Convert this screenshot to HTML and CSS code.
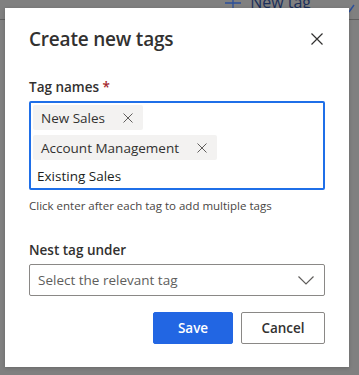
FILE: index.html
```html
<!DOCTYPE html>
<html lang="en">
<head>
    <meta charset="UTF-8">
    <meta name="viewport" content="width=device-width, initial-scale=1.0">
    <title>Create new tags</title>
    <link rel="stylesheet" href="styles.css">
</head>
<body>
    <div class="page">
        <div class="toolbar">
            <svg class="plus" width="16" height="16" viewBox="0 0 16 16"><path d="M8 0 V16 M0 8 H16" stroke="#2b4f9a" stroke-width="1.3"/></svg>
            <span class="new-tag">New tag</span>
            <svg class="search" width="10" height="14" viewBox="0 0 10 14"><path d="M2 12 L7 5" stroke="#2b4f9a" stroke-width="1.4" fill="none"/></svg>
        </div>
        <div class="rule"></div>
    </div>

    <div class="overlay">
        <div class="dialog">
            <div class="dialog-head">
                <h1>Create new tags</h1>
                <svg class="close" width="12" height="12" viewBox="0 0 12 12"><path d="M0.5 0.5 L11.5 11.5 M11.5 0.5 L0.5 11.5" stroke="#323130" stroke-width="1.2"/></svg>
            </div>

            <label class="field-label">Tag names <span class="req">*</span></label>
            <div class="tag-box">
                <div class="chip">New Sales <svg width="10" height="10" viewBox="0 0 10 10"><path d="M0.5 0.5 L9.5 9.5 M9.5 0.5 L0.5 9.5" stroke="#605e5c" stroke-width="1"/></svg></div>
                <div class="chip">Account Management <svg width="10" height="10" viewBox="0 0 10 10"><path d="M0.5 0.5 L9.5 9.5 M9.5 0.5 L0.5 9.5" stroke="#605e5c" stroke-width="1"/></svg></div>
                <div class="typed">Existing Sales</div>
            </div>
            <p class="hint">Click enter after each tag to add multiple tags</p>

            <label class="field-label nest">Nest tag under</label>
            <div class="select">
                <span>Select the relevant tag</span>
                <svg width="16" height="9" viewBox="0 0 16 9"><path d="M0.5 0.5 L8 8 L15.5 0.5" stroke="#605e5c" stroke-width="1.2" fill="none"/></svg>
            </div>

            <div class="actions">
                <button class="btn primary">Save</button>
                <button class="btn">Cancel</button>
            </div>
        </div>
    </div>
</body>
</html>
```

FILE: styles.css
```css
* {
    box-sizing: border-box;
    font-family: 'Open Sans', 'Noto Sans', sans-serif;
}
html, body {
    margin: 0;
    height: 100%;
}
body {
    background-color: #808080;
    overflow: hidden;
    position: relative;
}
.toolbar {
    height: 19px;
    display: flex;
    justify-content: flex-end;
    align-items: flex-end;
    padding-right: 2px;
}
.plus {
    margin-bottom: 8px;
    margin-right: 9px;
}
.new-tag {
    color: #1b2f5a;
    font-size: 16px;
    line-height: 16px;
    margin-bottom: 9px;
    margin-right: 36px;
}
.search {
    margin-bottom: 5px;
}
.rule {
    height: 1px;
    background-color: #5f5f5f;
}
.overlay {
    position: absolute;
    top: 0;
    left: 0;
    right: 0;
    bottom: 0;
    padding: 8px 0 0 5px;
}
.dialog {
    width: 344px;
    height: 359px;
    background-color: white;
    padding: 18px 24px 0 24px;
    box-shadow: 0 1px 4px rgba(0,0,0,0.2);
    color: #323130;
}
.dialog-head {
    display: flex;
    justify-content: space-between;
    align-items: center;
    height: 26px;
}
h1 {
    margin: 0;
    font-size: 19px;
    font-weight: 600;
    letter-spacing: -0.2px;
}
.close {
    margin-right: 2px;
}
.field-label {
    display: block;
    margin-top: 26px;
    font-size: 13.5px;
    font-weight: 600;
    line-height: 18px;
}
.req {
    color: #a4262c;
}
.tag-box {
    margin-top: 5px;
    border: 2px solid #1f6fe8;
    border-radius: 2px;
    height: 89px;
    padding: 2px 2px;
    display: flex;
    flex-direction: column;
    align-items: flex-start;
    gap: 5px;
}
.chip {
    background-color: #f3f2f1;
    border-radius: 2px;
    height: 25px;
    display: flex;
    align-items: center;
    gap: 18px;
    padding: 0 10px 0 8px;
    font-size: 13.5px;
    color: #323130;
}
.typed {
    font-size: 13.5px;
    color: #201f1e;
    padding-left: 4px;
    margin-top: 2px;
}
.hint {
    margin: 8px 0 0 0;
    font-size: 11.5px;
    color: #484644;
}
.field-label.nest {
    margin-top: 28px;
}
.select {
    margin-top: 5px;
    height: 32px;
    border: 1px solid #8a8886;
    border-radius: 2px;
    display: flex;
    justify-content: space-between;
    align-items: center;
    padding: 0 10px 0 8px;
    font-size: 13.5px;
    color: #605e5c;
}
.actions {
    margin-top: 16px;
    display: flex;
    justify-content: flex-end;
    gap: 8px;
}
.btn {
    height: 32px;
    border: 1px solid #8a8886;
    border-radius: 2px;
    background-color: white;
    color: #323130;
    font-size: 13.5px;
    font-weight: 600;
    width: 84px;
    padding: 0;
}
.btn.primary {
    background-color: #2266e3;
    border-color: #2266e3;
    color: white;
    width: 80px;
}
```
